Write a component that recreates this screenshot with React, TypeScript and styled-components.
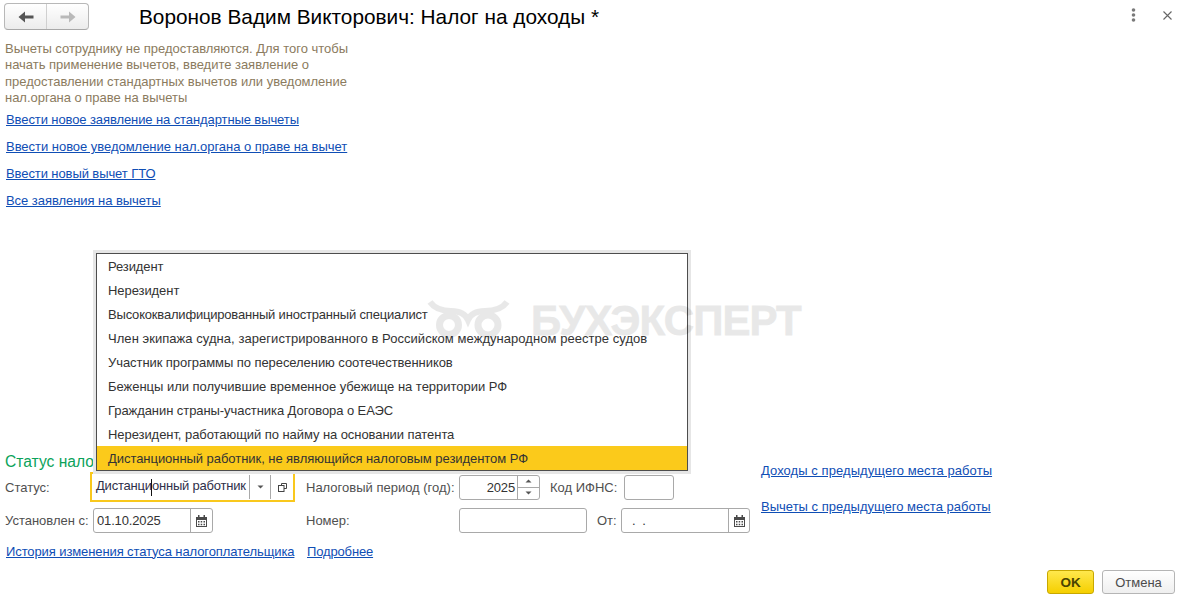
import React from 'react';
import styled, { createGlobalStyle } from 'styled-components';

const GlobalStyle = createGlobalStyle`
  html, body {
    margin: 0;
    padding: 0;
    background: #fff;
  }
  body {
    font-family: "Liberation Sans", Arial, sans-serif;
    font-size: 13px;
    color: #4b4b4b;
  }
`;

const Page = styled.div`
  position: relative;
  width: 1178px;
  height: 600px;
  display: flex;
  flex-direction: column;
  overflow: hidden;
`;

const Header = styled.header`
  height: 41px;
  display: flex;
  align-items: flex-start;
  padding: 3px 0 0 4px;
  box-sizing: border-box;
`;

const NavGroup = styled.div`
  width: 85px;
  height: 27px;
  display: flex;
  box-sizing: border-box;
  border: 1px solid #b8b8b8;
  border-bottom-color: #a8a8a8;
  border-radius: 4px;
  background: linear-gradient(#ffffff, #ececec);
`;

const NavButton = styled.button<{ $divided?: boolean }>`
  flex: 1;
  display: flex;
  align-items: center;
  justify-content: center;
  padding: 0;
  background: none;
  border: 0;
  border-left: ${(p) => (p.$divided ? '1px solid #d0d0d0' : '0')};
`;

const Title = styled.h1`
  margin: 0 0 0 50px;
  font-size: 20.8px;
  line-height: 28px;
  font-weight: 400;
  color: #000;
`;

const HeaderTools = styled.div`
  margin-left: auto;
  width: 41px;
  height: 24px;
  display: flex;
  align-items: center;
  justify-content: space-between;
  padding-right: 6px;
`;

const Hint = styled.p`
  margin: 0 0 0 5px;
  width: 350px;
  font-size: 13px;
  line-height: 16.25px;
  letter-spacing: -0.02px;
  color: #8b7b5e;
`;

const LinkList = styled.nav`
  display: flex;
  flex-direction: column;
  align-items: flex-start;
  padding-left: 6px;
`;

const LinkRow = styled.div`
  height: 27px;
  display: flex;
  align-items: center;
`;

const Link = styled.a<{ $track: number }>`
  color: #0f4eb5;
  text-decoration: underline;
  font-size: 13px;
  letter-spacing: ${(p) => p.$track}px;
  white-space: nowrap;
`;

const Spacer = styled.div`
  flex: 1;
`;

const FormSection = styled.section`
  display: flex;
  padding-left: 5px;
`;

const FormColumn = styled.div`
  width: 745px;
`;

const SectionTitle = styled.h2`
  margin: 0;
  height: 20px;
  font-size: 15.6px;
  line-height: 19px;
  font-weight: 400;
  color: #0aa25a;
  white-space: nowrap;
`;

const FieldRow = styled.div<{ $height: number; $top?: number }>`
  height: ${(p) => p.$height}px;
  margin-top: ${(p) => p.$top ?? 0}px;
  display: flex;
  align-items: center;
`;

const Label = styled.label<{ $width: number; $left?: number }>`
  width: ${(p) => p.$width}px;
  margin-left: ${(p) => p.$left ?? 0}px;
  flex-shrink: 0;
  color: #505050;
  white-space: nowrap;
`;

const Field = styled.div<{ $width: number }>`
  width: ${(p) => p.$width}px;
  height: 25px;
  flex-shrink: 0;
  box-sizing: border-box;
  display: flex;
  align-items: center;
  border: 1px solid #a9a9a9;
  border-radius: 3px;
  background: #fff;
  color: #333;
`;

const FieldValue = styled.span<{ $right?: boolean }>`
  flex: 1;
  padding: 0 ${(p) => (p.$right ? '2px' : '3px')} 0 ${(p) => (p.$right ? '0' : '3px')};
  text-align: ${(p) => (p.$right ? 'right' : 'left')};
  letter-spacing: -0.15px;
  white-space: nowrap;
`;

const FieldButton = styled.span<{ $width: number }>`
  width: ${(p) => p.$width}px;
  height: 100%;
  display: flex;
  align-items: center;
  justify-content: center;
  flex-shrink: 0;
  box-sizing: border-box;
  border-left: 1px solid #a9a9a9;
`;

const SpinButtons = styled.span`
  width: 22px;
  height: 100%;
  display: flex;
  flex-direction: column;
  flex-shrink: 0;
  box-sizing: border-box;
  border-left: 1px solid #a9a9a9;
`;

const SpinPart = styled.span<{ $bottom?: boolean }>`
  flex: 1;
  display: flex;
  align-items: center;
  justify-content: center;
  border-top: ${(p) => (p.$bottom ? '1px solid #a9a9a9' : '0')};
`;

const Combo = styled.div`
  position: relative;
  width: 205px;
  height: 30px;
  flex-shrink: 0;
  box-sizing: border-box;
  display: flex;
  align-items: center;
  border: 2px solid #f9c81d;
  background: #fff;
`;

const ComboText = styled.span`
  flex: 1;
  padding-left: 4px;
  color: #2f2f4a;
  letter-spacing: -0.2px;
  white-space: nowrap;
`;

const Caret = styled.span`
  display: inline-block;
  width: 0;
  height: 17px;
  margin: 0 -0.5px;
  border-left: 1px solid #111;
  vertical-align: middle;
`;

const ComboButton = styled.span<{ $width: number }>`
  width: ${(p) => p.$width}px;
  height: 24px;
  flex-shrink: 0;
  display: flex;
  align-items: center;
  justify-content: center;
  box-sizing: border-box;
  border-left: 1px solid #a9a9a9;
`;

const Popup = styled.ul`
  position: absolute;
  left: 4px;
  bottom: calc(100% + 3px);
  width: 592px;
  margin: 0;
  padding: 0;
  list-style: none;
  box-sizing: border-box;
  border: 1px solid #4d4d4d;
  background: #fff;
  box-shadow: 0 0 0 3px #e6e6e6;
  z-index: 2;
`;

const PopupItem = styled.li<{ $active?: boolean; $track: number }>`
  height: 24px;
  padding: 1px 0 0 11px;
  box-sizing: border-box;
  display: flex;
  align-items: center;
  letter-spacing: ${(p) => p.$track}px;
  color: #333;
  white-space: nowrap;
  background: ${(p) => (p.$active ? '#fbca1b' : 'transparent')};
`;

const SideLinks = styled.div`
  margin-left: 11px;
  display: flex;
  flex-direction: column;
  align-items: flex-start;
`;

const SideLinkRow = styled.div`
  height: 36px;
  display: flex;
  align-items: center;
`;

const Footer = styled.footer`
  display: flex;
  justify-content: flex-end;
  gap: 8px;
  padding: 8px 3px 6px 0;
`;

const OkButton = styled.button`
  width: 47px;
  height: 24px;
  padding: 0;
  box-sizing: border-box;
  border: 1px solid #c8a800;
  border-radius: 3px;
  background: linear-gradient(#ffe84d, #f5cf00);
  color: #4a4300;
  font-family: inherit;
  font-size: 13.5px;
  font-weight: 700;
`;

const CancelButton = styled.button`
  width: 73px;
  height: 24px;
  padding: 0;
  box-sizing: border-box;
  border: 1px solid #b5b5b5;
  border-radius: 3px;
  background: linear-gradient(#ffffff, #efefef);
  color: #4b4b4b;
  font-family: inherit;
  font-size: 13px;
`;

const Watermark = styled.div`
  position: absolute;
  left: 427px;
  top: 300px;
  display: flex;
  align-items: flex-start;
  gap: 20px;
  pointer-events: none;
  z-index: 3;
`;

const WatermarkText = styled.span`
  font-size: 42px;
  line-height: 41px;
  font-weight: 700;
  letter-spacing: -0.9px;
  color: #000;
  opacity: 0.085;
  -webkit-text-stroke: 0.8px #000;
  white-space: nowrap;
`;

const ArrowIcon = ({ dir, color }: { dir: 'left' | 'right'; color: string }) => (
  <svg width="16" height="12" viewBox="0 0 16 12">
    <path
      d={dir === 'left' ? 'M0.5 6 L7 0.5 V4.5 H15.5 V7.5 H7 V11.5 Z' : 'M15.5 6 L9 0.5 V4.5 H0.5 V7.5 H9 V11.5 Z'}
      fill={color}
    />
  </svg>
);

const CalendarIcon = () => (
  <svg width="11" height="12" viewBox="0 0 11 12">
    <path d="M0 2h2V0h1.5v2h4V0H9v2h2v10H0z" fill="#4a4a4a" />
    <path d="M1 5h9v6H1z" fill="#fff" />
    <path
      d="M2 6h1.5v1.5H2zM4.7 6h1.5v1.5H4.7zM7.5 6H9v1.5H7.5zM2 8.7h1.5v1.5H2zM4.7 8.7h1.5v1.5H4.7zM7.5 8.7H9v1.5H7.5z"
      fill="#4a4a4a"
    />
  </svg>
);

const OpenIcon = () => (
  <svg width="9" height="9" viewBox="0 0 9 9" fill="none" stroke="#444" strokeWidth="1">
    <path d="M3.5 2.5V0.5H8.5V5.5H6" />
    <rect x="0.5" y="2.5" width="5.5" height="6" fill="#fff" />
  </svg>
);

const Triangle = ({ up }: { up?: boolean }) => (
  <svg width="7" height="4" viewBox="0 0 7 4">
    <path d={up ? 'M3.5 0.5 L6.5 3.5 H0.5 Z' : 'M0.5 0.5 H6.5 L3.5 3.5 Z'} fill="#555" />
  </svg>
);

const MenuDots = () => (
  <svg width="5" height="14" viewBox="0 0 5 14" fill="#7a7a7a">
    <circle cx="2.5" cy="2" r="1.8" />
    <circle cx="2.5" cy="7" r="1.8" />
    <circle cx="2.5" cy="12" r="1.8" />
  </svg>
);

const CloseIcon = () => (
  <svg width="9" height="9" viewBox="0 0 9 9" stroke="#666" strokeWidth="1.1">
    <path d="M0.5 0.5 L8.5 8.5 M8.5 0.5 L0.5 8.5" />
  </svg>
);

const OwlLogo = () => (
  <svg width="84" height="40" viewBox="0 0 84 40" fill="none" stroke="#000" opacity="0.085">
    <circle cx="22" cy="25" r="9.5" strokeWidth="7" />
    <circle cx="61" cy="25" r="10" strokeWidth="7" />
    <path
      d="M3 2 C8 9 16 11 24 11 C32 11 38 13 41 20 C44 13 50 11 58 11 C66 11 75 9 80 2"
      strokeWidth="6"
    />
  </svg>
);

// the reference's hinted text runs a little wider or narrower line by line, hence a track per item
const taxStatuses = [
  { text: 'Резидент', track: -0.1 },
  { text: 'Нерезидент', track: -0.07 },
  { text: 'Высококвалифицированный иностранный специалист', track: -0.19 },
  { text: 'Член экипажа судна, зарегистрированного в Российском международном реестре судов', track: 0.05 },
  { text: 'Участник программы по переселению соотечественников', track: -0.065 },
  { text: 'Беженцы или получившие временное убежище на территории РФ', track: -0.02 },
  { text: 'Гражданин страны-участника Договора о ЕАЭС', track: -0.07 },
  { text: 'Нерезидент, работающий по найму на основании патента', track: -0.065 },
  { text: 'Дистанционный работник, не являющийся налоговым резидентом РФ', track: -0.05 },
];

const topLinks = [
  { text: 'Ввести новое заявление на стандартные вычеты', track: -0.095 },
  { text: 'Ввести новое уведомление нал.органа о праве на вычет', track: -0.03 },
  { text: 'Ввести новый вычет ГТО', track: -0.09 },
  { text: 'Все заявления на вычеты', track: -0.05 },
];

export default function App() {
  return (
    <Page>
      <GlobalStyle />
      <Header>
        <NavGroup>
          <NavButton>
            <ArrowIcon dir="left" color="#555" />
          </NavButton>
          <NavButton $divided>
            <ArrowIcon dir="right" color="#b9b9b9" />
          </NavButton>
        </NavGroup>
        <Title>Воронов Вадим Викторович: Налог на доходы *</Title>
        <HeaderTools>
          <MenuDots />
          <CloseIcon />
        </HeaderTools>
      </Header>

      <Hint>
        Вычеты сотруднику не предоставляются. Для того чтобы начать применение вычетов, введите заявление о
        предоставлении стандартных вычетов или уведомление нал.органа о праве на вычеты
      </Hint>

      <LinkList>
        {topLinks.map((link) => (
          <LinkRow key={link.text}>
            <Link href="#" $track={link.track}>
              {link.text}
            </Link>
          </LinkRow>
        ))}
      </LinkList>

      <Spacer />

      <FormSection>
        <FormColumn>
          <SectionTitle>Статус нало</SectionTitle>
          <FieldRow $height={30}>
            <Label $width={85}>Статус:</Label>
            <Combo>
              <Popup>
                {taxStatuses.map((item, i) => (
                  <PopupItem key={item.text} $track={item.track} $active={i === taxStatuses.length - 1}>
                    {item.text}
                  </PopupItem>
                ))}
              </Popup>
              <ComboText>
                Дистанци
                <Caret />
                онный работник
              </ComboText>
              <ComboButton $width={21}>
                <Triangle />
              </ComboButton>
              <ComboButton $width={23}>
                <OpenIcon />
              </ComboButton>
            </Combo>
            <Label $width={153} $left={11}>
              Налоговый период (год):
            </Label>
            <Field $width={81}>
              <FieldValue $right>2025</FieldValue>
              <SpinButtons>
                <SpinPart>
                  <Triangle up />
                </SpinPart>
                <SpinPart $bottom>
                  <Triangle />
                </SpinPart>
              </SpinButtons>
            </Field>
            <Label $width={74} $left={10}>
              Код ИФНС:
            </Label>
            <Field $width={50} />
          </FieldRow>
          <FieldRow $height={25} $top={6}>
            <Label $width={88}>Установлен с:</Label>
            <Field $width={120}>
              <FieldValue>01.10.2025</FieldValue>
              <FieldButton $width={22}>
                <CalendarIcon />
              </FieldButton>
            </Field>
            <Label $width={153} $left={93}>
              Номер:
            </Label>
            <Field $width={128} />
            <Label $width={24} $left={10}>
              От:
            </Label>
            <Field $width={129}>
              <FieldValue>&nbsp;&nbsp;.&nbsp;&nbsp;.</FieldValue>
              <FieldButton $width={21}>
                <CalendarIcon />
              </FieldButton>
            </Field>
          </FieldRow>
          <FieldRow $height={22} $top={7}>
            <Label $width={301} $left={1}>
              <Link href="#" $track={-0.1}>
                История изменения статуса налогоплательщика
              </Link>
            </Label>
            <Link href="#" $track={-0.15}>
              Подробнее
            </Link>
          </FieldRow>
        </FormColumn>
        <SideLinks>
          <SideLinkRow>
            <Link href="#" $track={0.07}>
              Доходы с предыдущего места работы
            </Link>
          </SideLinkRow>
          <SideLinkRow>
            <Link href="#" $track={0.01}>
              Вычеты с предыдущего места работы
            </Link>
          </SideLinkRow>
        </SideLinks>
      </FormSection>

      <Footer>
        <OkButton>OK</OkButton>
        <CancelButton>Отмена</CancelButton>
      </Footer>

      <Watermark>
        <OwlLogo />
        <WatermarkText>БУХЭКСПЕРТ</WatermarkText>
      </Watermark>
    </Page>
  );
}
